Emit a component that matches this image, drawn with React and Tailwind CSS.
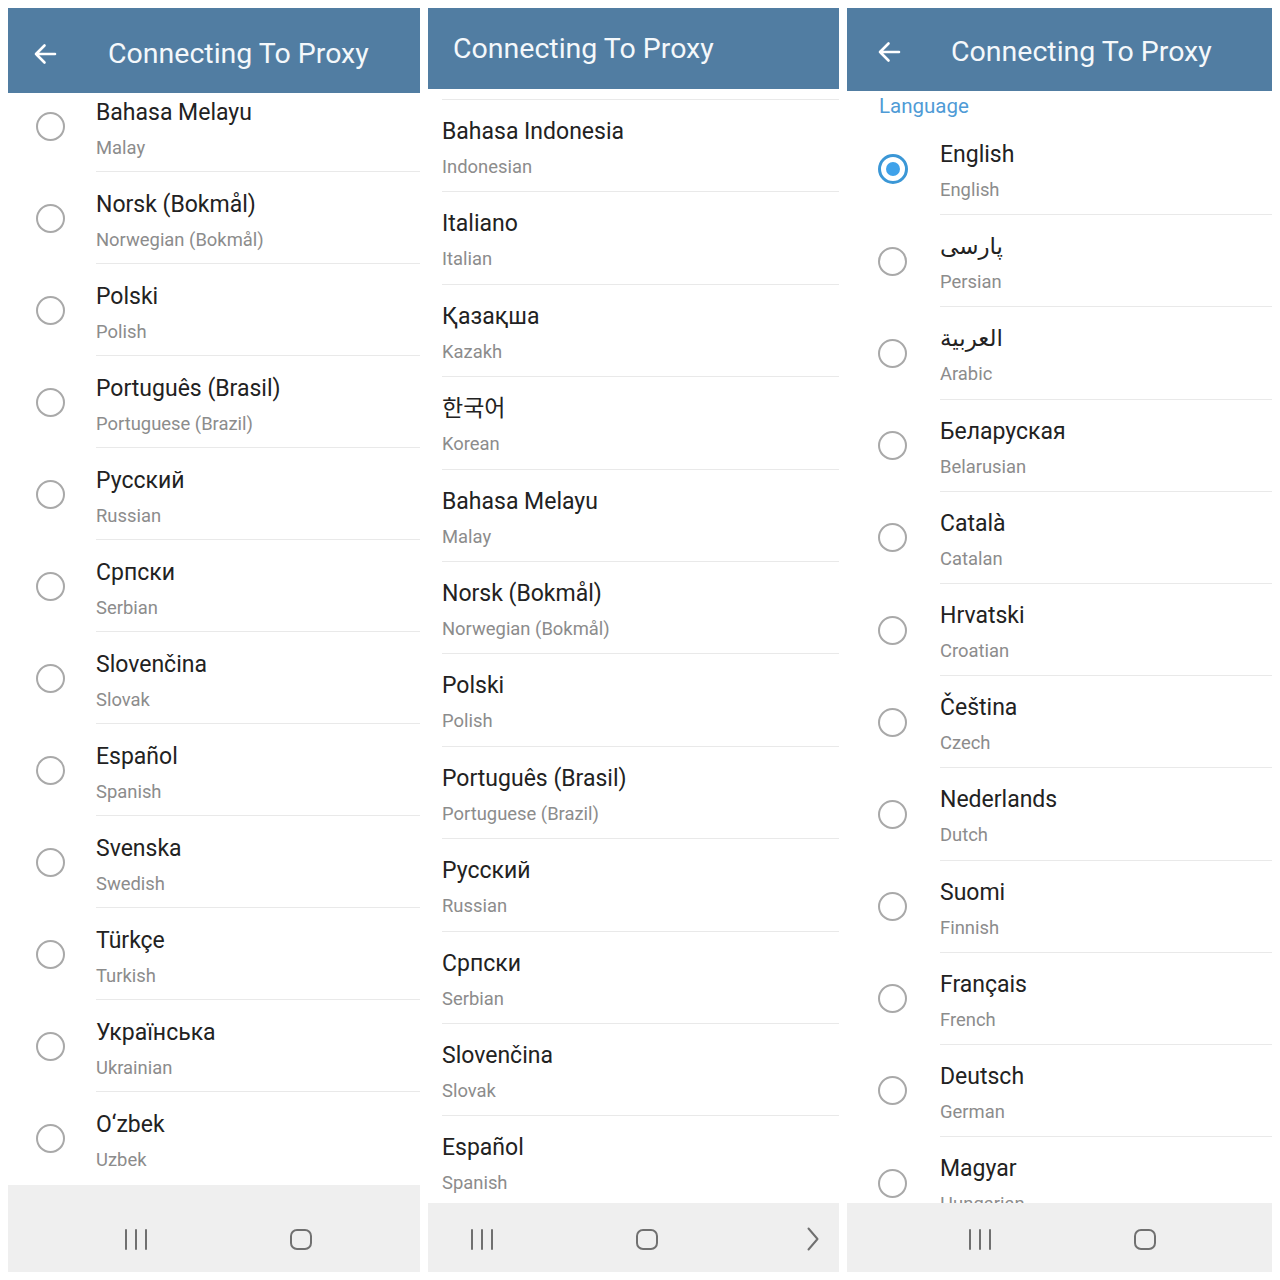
import React from 'react';

const panelOne = [
  ['Bahasa Melayu', 'Malay'],
  ['Norsk (Bokmål)', 'Norwegian (Bokmål)'],
  ['Polski', 'Polish'],
  ['Português (Brasil)', 'Portuguese (Brazil)'],
  ['Русский', 'Russian'],
  ['Српски', 'Serbian'],
  ['Slovenčina', 'Slovak'],
  ['Español', 'Spanish'],
  ['Svenska', 'Swedish'],
  ['Türkçe', 'Turkish'],
  ['Українська', 'Ukrainian'],
  ['O‘zbek', 'Uzbek'],
];

const panelTwo = [
  ['Bahasa Indonesia', 'Indonesian'],
  ['Italiano', 'Italian'],
  ['Қазақша', 'Kazakh'],
  ['한국어', 'Korean'],
  ['Bahasa Melayu', 'Malay'],
  ['Norsk (Bokmål)', 'Norwegian (Bokmål)'],
  ['Polski', 'Polish'],
  ['Português (Brasil)', 'Portuguese (Brazil)'],
  ['Русский', 'Russian'],
  ['Српски', 'Serbian'],
  ['Slovenčina', 'Slovak'],
  ['Español', 'Spanish'],
];

const panelThree = [
  ['English', 'English'],
  ['پارسی', 'Persian'],
  ['العربية', 'Arabic'],
  ['Беларуская', 'Belarusian'],
  ['Català', 'Catalan'],
  ['Hrvatski', 'Croatian'],
  ['Čeština', 'Czech'],
  ['Nederlands', 'Dutch'],
  ['Suomi', 'Finnish'],
  ['Français', 'French'],
  ['Deutsch', 'German'],
  ['Magyar', 'Hungarian'],
];

const BackArrow = () => (
  <svg width="24" height="22" viewBox="0 0 24 22" fill="none">
    <path d="M22 11H3M11.5 2.5L3 11l8.5 8.5" stroke="#ffffff" strokeWidth="2.6" strokeLinecap="round" strokeLinejoin="round" />
  </svg>
);

const Recents = () => (
  <div className="flex w-[22px] h-[21px] justify-between">
    <span className="block w-[2px] h-full bg-[#707070] rounded-full" />
    <span className="block w-[2px] h-full bg-[#707070] rounded-full" />
    <span className="block w-[2px] h-full bg-[#707070] rounded-full" />
  </div>
);

const Home = () => (
  <div className="w-[22px] h-[21px] rounded-[7px] border-2 border-[#707070]" />
);

const Back = () => (
  <svg width="12" height="24" viewBox="0 0 12 24" fill="none">
    <path d="M1.5 1.5L10.5 12L1.5 22.5" stroke="#707070" strokeWidth="2" strokeLinecap="round" strokeLinejoin="round" />
  </svg>
);

const Radio = ({ selected }) =>
  selected ? (
    <div className="w-[30px] h-[30px] rounded-full border-[3px] border-[#3b97d6] flex items-center justify-center">
      <div className="w-[14px] h-[14px] rounded-full bg-[#3fa2ea]" />
    </div>
  ) : (
    <div className="w-[29px] h-[29px] rounded-full border-[2.6px] border-[#a9a9a9]" />
  );

const Texts = ({ title, sub }) => (
  <>
    <div className="text-[23px] leading-[28px] text-[#222222] whitespace-nowrap">{title}</div>
    <div className="mt-[9px] text-[18.4px] leading-[24px] text-[#8c8c8c] whitespace-nowrap">{sub}</div>
  </>
);

export default function App() {
  return (
    <div className="w-[1280px] h-[1280px] bg-white flex gap-[8px] pt-[8px] pl-[8px] font-['Roboto','DejaVu_Sans','Noto_Sans_CJK_KR',sans-serif]">
      {/* left screen */}
      <div className="w-[412px] h-[1264px] flex flex-col bg-white">
        <div className="h-[85px] shrink-0 bg-[#517da2] flex items-center pt-[6px] pl-[25px]">
          <BackArrow />
          <div className="ml-[51px] text-[28.5px] leading-[34px] text-[#f4f8fb] whitespace-nowrap">Connecting To Proxy</div>
        </div>
        <div className="flex-1 overflow-hidden">
          <div className="-mt-[13px]">
            {panelOne.map(([t, s], i) => (
              <div key={t} className="flex h-[92px]">
                <div className="w-[88px] shrink-0 pl-[28px] flex items-center">
                  <Radio />
                </div>
                <div className={i === panelOne.length - 1 ? 'flex-1 pt-[19px]' : 'flex-1 border-b border-[#e9e9e9] pt-[19px]'}>
                  <Texts title={t} sub={s} />
                </div>
              </div>
            ))}
          </div>
        </div>
        <div className="h-[87px] shrink-0 bg-[#efefef] flex items-end pb-[22px] pl-[117px] gap-[143px]">
          <Recents />
          <Home />
        </div>
      </div>

      {/* middle screen */}
      <div className="w-[411px] h-[1264px] flex flex-col bg-white">
        <div className="h-[81px] shrink-0 bg-[#517da2] flex items-center pl-[25px]">
          <div className="text-[28.5px] leading-[34px] text-[#f4f8fb] whitespace-nowrap">Connecting To Proxy</div>
        </div>
        <div className="flex-1 overflow-hidden">
          <div className="h-[11px] ml-[14px] border-b border-[#e9e9e9]" />
          {panelTwo.map(([t, s]) => (
            <div key={t + s} className="h-[92.4px] pl-[14px]">
              <div className="h-full border-b border-[#e9e9e9] pt-[18px]">
                <Texts title={t} sub={s} />
              </div>
            </div>
          ))}
        </div>
        <div className="h-[69px] shrink-0 bg-[#efefef] flex items-end pb-[22px] pl-[43px]">
          <Recents />
          <div className="ml-[143px]">
            <Home />
          </div>
          <div className="ml-[149px] -mb-[1px]">
            <Back />
          </div>
        </div>
      </div>

      {/* right screen */}
      <div className="w-[425px] h-[1264px] flex flex-col bg-white">
        <div className="h-[83px] shrink-0 bg-[#517da2] flex items-center pt-[4px] pl-[30px]">
          <BackArrow />
          <div className="ml-[50px] text-[28.5px] leading-[34px] text-[#f4f8fb] whitespace-nowrap">Connecting To Proxy</div>
        </div>
        <div className="flex-1 overflow-hidden">
          <div className="h-[32px] pl-[32px] text-[20.5px] leading-[30px] text-[#4f9bd6]">Language</div>
          {panelThree.map(([t, s], i) => (
            <div key={s} className="flex h-[92.2px]">
              <div className="w-[93px] shrink-0 pl-[31px] flex items-center">
                <Radio selected={i === 0} />
              </div>
              <div className="flex-1 border-b border-[#e9e9e9] pt-[18px]">
                <Texts title={t} sub={s} />
              </div>
            </div>
          ))}
        </div>
        <div className="h-[69px] shrink-0 bg-[#efefef] flex items-end pb-[22px] pl-[122px] gap-[143px]">
          <Recents />
          <Home />
        </div>
      </div>
    </div>
  );
}
